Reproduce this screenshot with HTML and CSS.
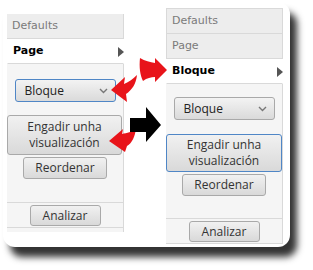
FILE: index.html
```html
<!DOCTYPE html>
<html>
<head>
<meta charset="utf-8">
<link rel="stylesheet" href="styles.css">
</head>
<body>
<div class="stage">
  <div class="card">
    <div class="panel panel-a">
      <div class="tab">Defaults</div>
      <div class="tab tab-active">Page<span class="caret"></span></div>
      <div class="content">
        <div class="select select-focus">Bloque<svg class="chev" width="9" height="6" viewBox="0 0 9 6"><path d="M1 1 L4.5 4.5 L8 1" fill="none" stroke="#777" stroke-width="1.4"/></svg></div>
        <div class="btn btn-wide">Engadir unha<br>visualización</div>
        <div class="btn btn-reorder">Reordenar</div>
        <div class="foot"><div class="btn btn-analyze">Analizar</div></div>
      </div>
    </div>
    <div class="panel panel-b">
      <div class="tab">Defaults</div>
      <div class="tab">Page</div>
      <div class="tab tab-active">Bloque<span class="caret"></span></div>
      <div class="content">
        <div class="select">Bloque<svg class="chev" width="9" height="6" viewBox="0 0 9 6"><path d="M1 1 L4.5 4.5 L8 1" fill="none" stroke="#777" stroke-width="1.4"/></svg></div>
        <div class="btn btn-wide btn-focus">Engadir unha<br>visualización</div>
        <div class="btn btn-reorder">Reordenar</div>
        <div class="foot"><div class="btn btn-analyze">Analizar</div></div>
      </div>
    </div>
  </div>
  <svg class="arrows" width="313" height="270" viewBox="0 0 313 270">
    <path d="M111 90 L125 77 L124 84 C129 82 133 79 137 75 C136 84 132 90 126 94 L127 102 Z" fill="#e8141a"/>
    <path d="M167 70 L155 58 L155 63 C150 62 145 61 140 58 C139 67 140 75 143 81 C147 78 151 77 155 77 L155 82 Z" fill="#e8141a"/>
    <path d="M109 141 L123 129 L122 134 C127 133 132 132 136 128 C135 137 132 143 127 146 L125 152 Z" fill="#e8141a"/>
    <path d="M130 118 L146 118 L146 107 L161 125 L146 142 L146 132 L130 132 Z" fill="#000"/>
  </svg>
</div>
</body>
</html>
```

FILE: styles.css
```css
html, body {
  margin: 0;
  padding: 0;
  background: #ffffff;
}

.stage {
  position: relative;
  width: 313px;
  height: 270px;
  overflow: hidden;
}

.card {
  margin: 2px 0 0 3px;
  width: 287px;
  height: 245px;
  background: #ffffff;
  border-radius: 12px;
  box-shadow: 7px 10px 7px rgba(0, 0, 0, 0.8);
  display: flex;
  align-items: flex-start;
  gap: 42px;
  padding-left: 4px;
  box-sizing: border-box;
}

.panel {
  width: 117px;
  display: flex;
  flex-direction: column;
  font-family: "DejaVu Sans", Verdana, sans-serif;
  font-size: 11px;
}

.panel-a {
  margin-top: 12px;
}

.panel-b {
  margin-top: 6px;
}

.tab {
  height: 24px;
  line-height: 24px;
  padding-left: 5px;
  color: #7a7a7a;
  background: #ededed;
  border: 1px solid #d9d9d9;
  border-top: none;
  position: relative;
}

.panel-b .tab:first-child {
  border-top: 1px solid #d9d9d9;
}

.panel-a .tab:first-child {
  border-left: none;
}

.tab-active {
  background: #ffffff;
  color: #000000;
  font-weight: bold;
  border-right-color: transparent;
  border-left-color: transparent;
}

.caret {
  position: absolute;
  right: -1px;
  top: 8px;
  width: 0;
  height: 0;
  border-top: 5px solid transparent;
  border-bottom: 5px solid transparent;
  border-left: 6px solid #555;
}

.content {
  background: #f5f5f5;
  border-right: 1px solid #d9d9d9;
  display: flex;
  flex-direction: column;
  align-items: center;
  font-family: "Open Sans", "Noto Sans", sans-serif;
  font-size: 12px;
  color: #333;
}

.panel-a .content {
  padding-top: 15px;
  padding-bottom: 4px;
}

.panel-b .content {
  padding-top: 13px;
}

.select {
  width: 101px;
  height: 23px;
  box-sizing: border-box;
  border: 1px solid #a9a9a9;
  border-radius: 3px;
  background: linear-gradient(#f3f3f3, #dadada);
  display: flex;
  align-items: center;
  justify-content: space-between;
  padding: 0 7px 0 9px;
  font-size: 12px;
  color: #222;
}

.select-focus {
  border-color: #4f86c6;
}

.chev {
  display: block;
}

.btn {
  box-sizing: border-box;
  border: 1px solid #a9a9a9;
  border-radius: 3px;
  background: linear-gradient(#f1f1f1, #d9d9d9);
  text-align: center;
  color: #333;
}

.btn-focus {
  border-color: #4f86c6;
}

.btn-wide {
  line-height: 16px;
  padding: 2px 0;
  margin-top: 14px;
  align-self: stretch;
}

.panel-a .btn-wide {
  margin-top: 13px;
  padding: 3px 0;
  margin-right: 1px;
}

.btn-reorder {
  width: 84px;
  height: 22px;
  line-height: 20px;
  margin-top: 2px;
}

.foot {
  align-self: stretch;
  margin-top: 22px;
  border-top: 1px solid #d9d9d9;
  border-bottom: 1px solid #d9d9d9;
  padding: 2px 0 1px;
  display: flex;
  justify-content: center;
}

.panel-a .foot {
  margin-top: 23px;
}

.btn-analyze {
  width: 71px;
  height: 21px;
  line-height: 19px;
}

.arrows {
  position: absolute;
  left: 0;
  top: 0;
}
```
